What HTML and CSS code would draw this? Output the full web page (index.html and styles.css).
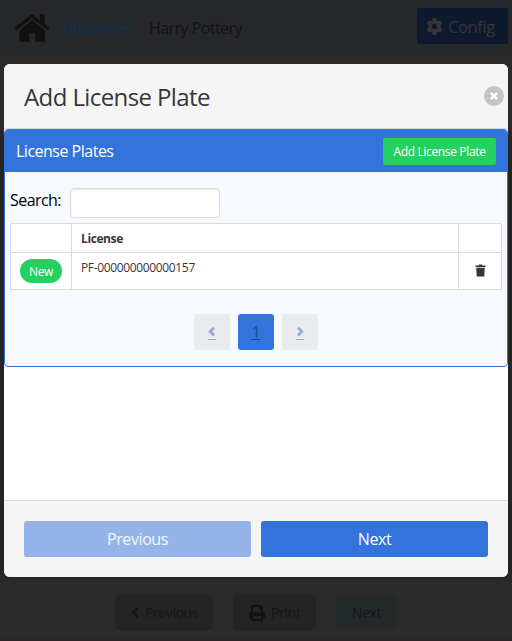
FILE: index.html
```html
<!DOCTYPE html>
<html lang="en">
<head>
<meta charset="utf-8">
<title>Add License Plate</title>
<link rel="stylesheet" href="styles.css">
</head>
<body>
<nav class="navbar">
  <svg class="home" viewBox="0 0 36 28"><path d="M0 14 18 0l8 6.2V0h4.500v9.600L36 14l-2.200 2.600L18 4 2.200 16.600z"/><path d="M18 6 31 16.300V28H21.300v-8.700h-6V28H5.500V16.300z"/></svg>
  <span class="receive t">Receive</span>
  <svg class="caret" viewBox="0 0 10 7"><path d="M1 1.200l4 4 4-4"/></svg>
  <span class="user t">Harry Pottery</span>
  <div class="config"><svg class="gear" viewBox="0 0 16 16"><path fill-rule="evenodd" d="M6.300 0h3.400l.5 2.300 1.200.7 2.200-.7 1.900 3.100-1.700 1.500v2.200l1.700 1.500-1.900 3.100-2.200-.7-1.200.7-.5 2.300H6.300l-.5-2.300-1.200-.7-2.200.7L.5 10.600l1.700-1.500V6.900L.5 5.400l1.900-3.100 2.200.7 1.200-.7zM8 5.500a2.500 2.500 0 1 0 0 5 2.500 2.500 0 0 0 0-5z"/></svg><span class="t">Config</span></div>
</nav>
<div class="stage">
  <section class="modal">
    <header class="modal-head"><h1 class="t">Add License Plate</h1><button class="close" aria-label="close"><svg viewBox="0 0 20 20"><path d="M6.800 6.800l6.400 6.400M13.200 6.800l-6.400 6.400"/></svg></button></header>
    <div class="modal-body">
      <div class="panel">
        <div class="panel-head"><span class="t">License Plates</span><button class="add"><span class="t">Add License Plate</span></button></div>
        <div class="panel-body">
          <label class="search"><span class="t">Search:</span><input type="text"></label>
          <table>
            <tr class="head"><th></th><th><span class="t">License</span></th><th></th></tr>
            <tr class="row"><td class="tagcell"><span class="tag"><span class="t">New</span></span></td><td class="plate"><span class="t">PF-000000000000157</span></td><td class="trash"><svg viewBox="0 0 12 13"><path d="M.5 1h3.300l.7-1h3l.7 1h3.300v1.600H.5zM1.300 3.400h9.400l-.6 9.600H1.900z"/></svg></td></tr>
          </table>
          <div class="pages">
            <a class="page"><svg viewBox="0 0 8 10"><path d="M6 1.200l-3.800 3.800 3.800 3.800"/></svg></a>
            <a class="page current"><span>1</span></a>
            <a class="page"><svg viewBox="0 0 8 10"><path d="M2 1.200l3.800 3.800-3.800 3.800"/></svg></a>
          </div>
        </div>
      </div>
    </div>
    <footer class="modal-foot"><button class="prev"><span class="t">Previous</span></button><button><span class="t">Next</span></button></footer>
  </section>
  <div class="actions">
    <div class="act act-prev"><svg class="left" viewBox="0 0 8 11"><path d="M6.500 1l-4.300 4.500 4.300 4.500"/></svg><span class="t">Previous</span></div>
    <div class="act act-print"><svg class="printer" viewBox="0 0 16 16"><path fill-rule="evenodd" d="M2 1q0-1 1-1h9l2 2v5q2 0 2 2v4h-2v2q0 1-1 1H3q-1 0-1-1v-2H0V9q0-2 2-2zm2 1v5h8V4h-2V2zm0 9v3h8v-3z"/></svg><span class="t">Print</span></div>
    <div class="act act-next"><span class="t">Next</span></div>
  </div>
</div>
</body>
</html>
```
FILE: styles.css
```css
* { box-sizing: border-box; }
body { margin: 0; height: 641px; overflow: hidden; background: #26282c; font-family: "Open Sans", "Noto Sans", sans-serif; font-size: 16px; }
svg { display: block; flex: none; }
button { border: 0; padding: 0; font: inherit; color: #fff; }
.t { white-space: nowrap; letter-spacing: -0.4px; }
.navbar { height: 56px; display: flex; align-items: center; padding: 0 4px 0 14px; color: #131313; background: #26282c; }
.home { width: 36px; height: 28px; fill: #111; }
.receive { margin-left: 14px; width: 54px; color: #0e3350; letter-spacing: -0.55px; }
.caret { width: 11px; height: 8px; margin-left: 2px; fill: none; stroke: #0e3350; stroke-width: 2.600; }
.user { margin-left: 18px; letter-spacing: -0.55px; }
.config { margin: -4px 0 0 auto; width: 91px; height: 36px; border-radius: 3px; background: #0f192d; color: #353638; display: flex; align-items: center; padding-left: 9px; gap: 5px; font-size: 16.5px; }
.gear { width: 17px; height: 17px; fill: #353638; }
.config .t { letter-spacing: -0.4px; }
.stage { height: 585px; padding: 8px 4px 0; background: linear-gradient(#2c2a29 0 70px, #242424 80px 515px, #26272a 521px 524px, #2b2b2b 526px 583px, #2c2527 583px); border-radius: 6px 6px 0 0; }
.modal { height: 513px; border-radius: 6px; overflow: hidden; background: #fff; display: flex; flex-direction: column; }
.modal-head { height: 65px; background: #f5f5f5; border-bottom: 1px solid #dbdbdb; padding: 0 4px 0 20px; display: flex; align-items: center; justify-content: space-between; }
h1 { margin: 1px 0 0; font-size: 24px; font-weight: 400; color: #363636; }
h1.t { letter-spacing: -0.6px; }
.close { width: 20px; height: 20px; border-radius: 50%; background: #c4c4c4; }
.close svg { width: 20px; height: 20px; fill: none; stroke: #fff; stroke-width: 2.600; }
.modal-body { flex: 1; }
.panel { height: 238px; border: 1px solid #3273dc; border-radius: 4px; background: #f6f9fe; overflow: hidden; }
.panel-head { height: 42px; background: #3273dc; color: #fff; display: flex; align-items: center; justify-content: space-between; padding: 0 11px; }
.panel-head .t { letter-spacing: -0.5px; }
.panel-head .add .t { letter-spacing: -0.35px; }
.add { width: 113px; height: 27px; border-radius: 2px; background: #23d160; font-size: 12px; }
.panel-body { padding: 16px 5px 0; }
.search { height: 30px; display: flex; color: #000; }
.search span { width: 60px; padding-top: 1px; letter-spacing: -0.55px; }
input { width: 150px; height: 30px; border: 1px solid #dbdbdb; border-radius: 4px; background: #fff; box-shadow: inset 0 1px 2px rgba(10,10,10,.1); }
table { width: 492px; margin-top: 5px; border-collapse: collapse; table-layout: fixed; background: #fff; font-size: 12px; color: #363636; }
th, td { border: 1px solid #dbdbdb; padding: 0 9px; text-align: left; }
.head { height: 29px; }
.row { height: 37px; }
th:first-child { width: 61px; }
th:last-child { width: 43px; }
.tag { width: 42px; height: 24px; border-radius: 12px; display: flex; align-items: center; justify-content: center; background: #23d160; color: #fff; }
.plate { padding-bottom: 7px; }
.plate .t { letter-spacing: -0.35px; }
.trash svg { width: 11px; height: 13px; margin: -2px auto 0; fill: #363636; }
.pages { margin-top: 24px; display: flex; justify-content: center; gap: 8px; }
.page { width: 36px; height: 36px; border-radius: 3px; background: #e8eaed; display: flex; align-items: center; justify-content: center; }
.page svg { width: 8px; height: 14px; margin-top: 2px; border-bottom: 1px solid #8fa8d7; padding-bottom: 2px; fill: none; stroke: #8fa8d7; stroke-width: 2.600; }
.current { background: #3273dc; color: #20498b; text-decoration: underline; }
.modal-foot { height: 77px; border-top: 1px solid #dbdbdb; background: #f5f5f5; padding: 20px; display: flex; gap: 10px; }
.modal-foot button { flex: 1; height: 36px; border-radius: 3px; background: #3273dc; }
.modal-foot .t { letter-spacing: -0.4px; }
.modal-foot .prev { background: #93b3e9; color: #f4f7fd; }
.actions { margin-top: 18px; padding-left: 111px; display: flex; gap: 20px; color: #161616; font-size: 14px; }
.act { height: 35px; border-radius: 4px; background: #242424; display: flex; align-items: center; }
.act-prev { width: 98px; padding-left: 16px; }
.act-print { width: 83px; padding-left: 16px; }
.act-next { width: 61px; padding-left: 16px; background: #24292a; }
.left { width: 8px; height: 11px; margin-right: 6px; fill: none; stroke: #151515; stroke-width: 2.400; }
.printer { width: 16px; height: 16px; margin-right: 6px; fill: #121212; }
```
